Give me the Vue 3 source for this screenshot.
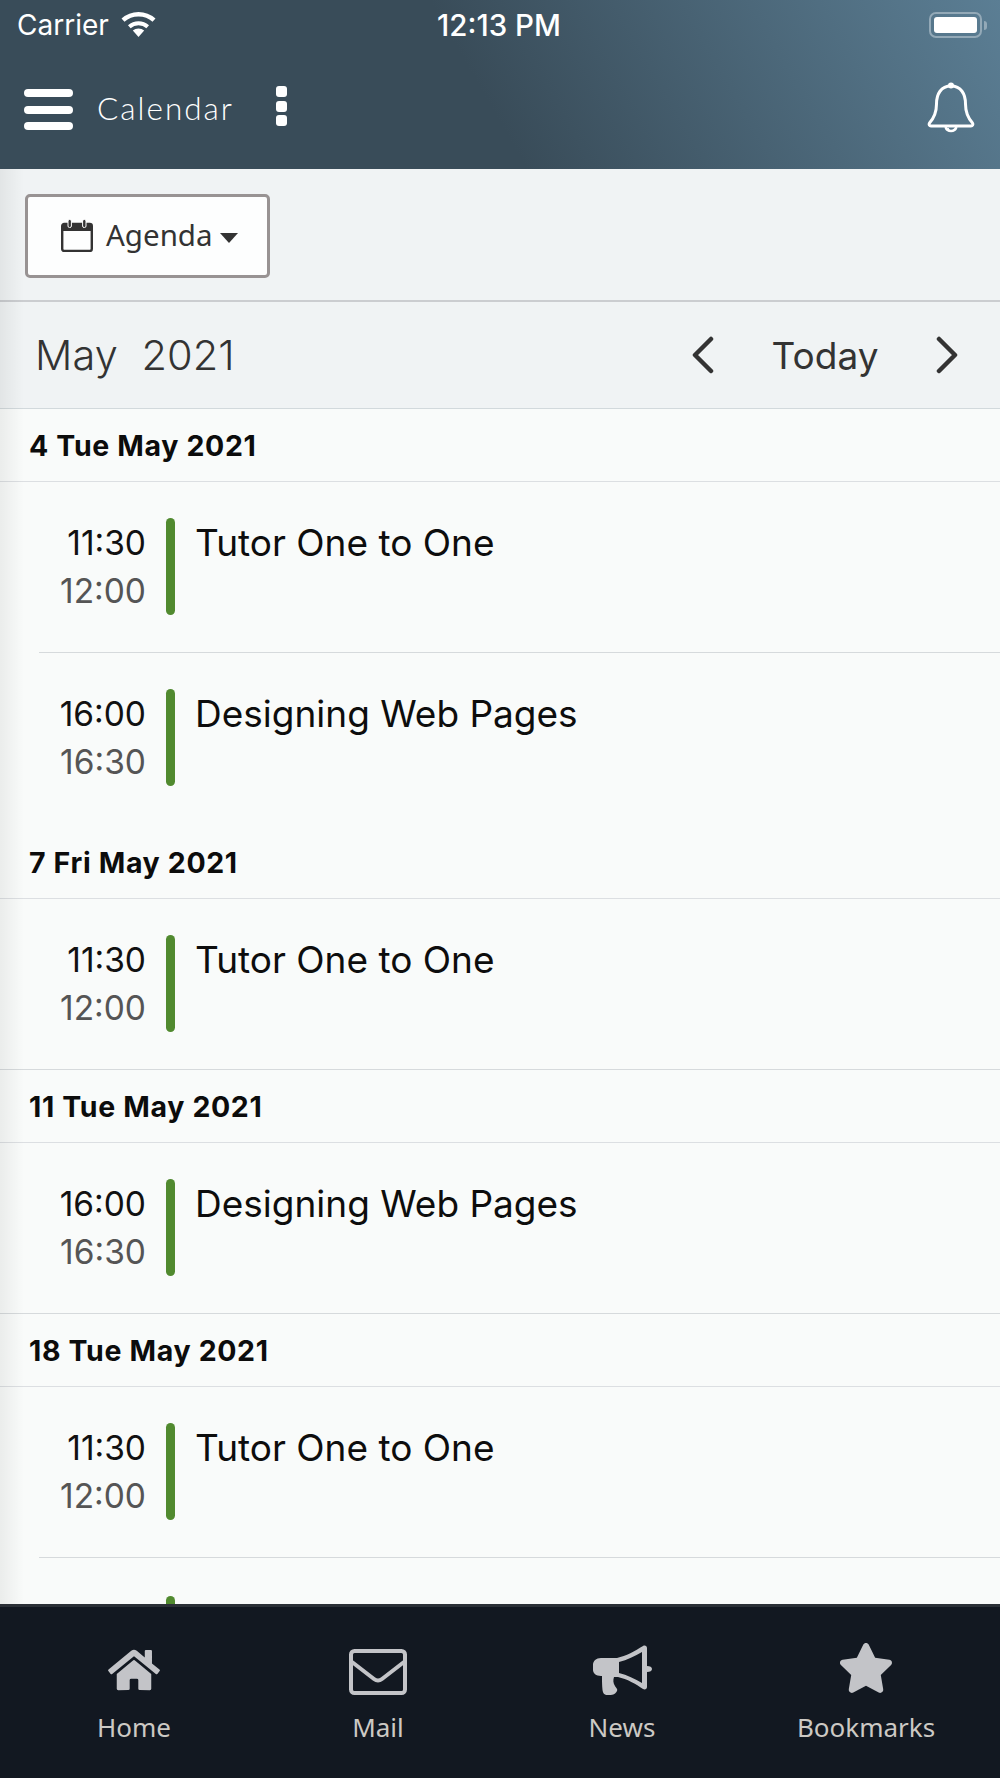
<template>
  <div class="screen">
    <header class="top">
      <div class="status">
        <div class="carrier">
          <span>Carrier</span>
          <svg class="wifi" viewBox="0 0 37 27">
            <path d="M18.5 27 L12.8 20.6 A8.6 8.6 0 0 1 24.2 20.6 Z" fill="#fff" />
            <path d="M9.3 16.7 A14 14 0 0 1 27.7 16.7" fill="none" stroke="#fff" stroke-width="4" />
            <path d="M3 10.2 A23 23 0 0 1 34 10.2" fill="none" stroke="#fff" stroke-width="4.4" />
          </svg>
        </div>
        <div class="clock">12:13 PM</div>
        <div class="battery-wrap">
          <div class="battery"><div class="battery-fill"></div></div>
          <div class="battery-tip"></div>
        </div>
      </div>
      <div class="nav">
        <div class="burger"><i></i><i></i><i></i></div>
        <div class="page-title">Calendar</div>
        <div class="dots"><i></i><i></i><i></i></div>
        <svg class="bell" viewBox="0 0 48 52">
          <path d="M24 4 C14 4 9.5 12 9.5 22 C9.5 31 7 36 2.5 41 C1.5 42.5 2.5 44 4 44 H44 C45.5 44 46.5 42.5 45.5 41 C41 36 38.5 31 38.5 22 C38.5 12 34 4 24 4 Z" fill="none" stroke="#fff" stroke-width="3" stroke-linejoin="round" />
          <circle cx="24" cy="3.5" r="3" fill="#fff" />
          <path d="M18.5 45 A5.8 5.8 0 0 0 29.5 45" fill="none" stroke="#fff" stroke-width="2.5" />
          <path d="M21 46 A3.5 3.5 0 0 0 24.5 49" fill="none" stroke="#fff" stroke-width="1.5" />
        </svg>
      </div>
    </header>

    <div class="content">
      <div class="toolbar">
        <button class="view-btn">
          <svg class="cal-icon" viewBox="0 0 32 33">
            <rect x="1.2" y="5" width="29.6" height="27" rx="2" fill="none" stroke="#333" stroke-width="2.4" />
            <rect x="1.2" y="5" width="29.6" height="7" fill="#333" />
            <rect x="7" y="0.5" width="3.4" height="8" rx="1.5" fill="#333" stroke="#fff" stroke-width="1" />
            <rect x="21.6" y="0.5" width="3.4" height="8" rx="1.5" fill="#333" stroke="#fff" stroke-width="1" />
          </svg>
          <span>Agenda</span>
          <i class="caret"></i>
        </button>
      </div>

      <div class="month-bar">
        <div class="month">May&nbsp;&nbsp;2021</div>
        <svg class="chev" viewBox="0 0 22 38"><path d="M19 3 L3 19 L19 35" /></svg>
        <div class="today">Today</div>
        <svg class="chev" viewBox="0 0 22 38"><path d="M3 3 L19 19 L3 35" /></svg>
      </div>

      <main class="agenda">
        <section v-for="day in days" :key="day.label" class="day">
          <div class="day-head">{{ day.label }}</div>
          <div v-for="(ev, i) in day.events" :key="i" class="event" :class="{ lined: ev.lined, inset: ev.inset }">
            <div class="times">
              <div class="start">{{ ev.start }}</div>
              <div class="end">{{ ev.end }}</div>
            </div>
            <div class="bar"></div>
            <div class="name">{{ ev.name }}</div>
          </div>
        </section>
        <div class="bar peek"></div>
      </main>

      <div class="edge-shade"></div>
    </div>

    <footer class="tabs">
      <div class="tab">
        <svg class="ico-home" viewBox="0 0 576 512">
          <path d="M280.37 148.26L96 300.11V464a16 16 0 0 0 16 16l112.06-.29a16 16 0 0 0 15.92-16V368a16 16 0 0 1 16-16h64a16 16 0 0 1 16 16v95.64a16 16 0 0 0 16 16.05L464 480a16 16 0 0 0 16-16V300L295.67 148.26a12.19 12.19 0 0 0-15.3 0zM571.6 251.47L488 182.56V44.05a12 12 0 0 0-12-12h-56a12 12 0 0 0-12 12v72.61L318.47 43a48 48 0 0 0-61 0L4.34 251.47a12 12 0 0 0-1.6 16.9l25.5 31A12 12 0 0 0 45.15 301l235.22-193.74a12.19 12.19 0 0 1 15.3 0L530.9 301a12 12 0 0 0 16.9-1.6l25.5-31a12 12 0 0 0-1.7-16.93z" />
        </svg>
        <span>Home</span>
      </div>
      <div class="tab">
        <svg class="ico-mail" viewBox="0 0 58 46">
          <rect x="2" y="2" width="54" height="42" rx="3.5" fill="none" stroke="#c3c4c8" stroke-width="4" />
          <path d="M3 13 L25 30 Q29 33 33 30 L55 13" fill="none" stroke="#c3c4c8" stroke-width="4" />
        </svg>
        <span>Mail</span>
      </div>
      <div class="tab">
        <svg class="ico-news" viewBox="0 0 59 51">
          <path fill-rule="evenodd" d="M8 13 H24 C33 11 42 6 50 1 C52 0 54 1 54 3 V21 C57 21 59 22 59 24 C59 26 57 27 54 27 V42 C54 44 52 45 50 44 C43 39 34 34 25 32 H21 C20 35 20 38 22 41 C23 43 25 44 24 46 C22 50 19 50 15 50 C11 50 10 48 9.5 45 C9 40 9 36 9 31 H8 C3 31 0 28 0 25 V20 C0 16 3 13 8 13 Z M26 17 V28 C34 30 42 34 49 38 V7 C42 11 34 15 26 17 Z" />
        </svg>
        <span>News</span>
      </div>
      <div class="tab">
        <svg class="ico-star" viewBox="0 0 576 512">
          <path d="M259.3 17.8L194 150.2 47.9 171.5c-26.2 3.8-36.7 36.1-17.7 54.6l105.7 103-25 145.5c-4.5 26.3 23.2 46 46.4 33.7L288 439.6l130.7 68.7c23.2 12.2 50.9-7.4 46.4-33.7l-25-145.5 105.7-103c19-18.5 8.5-50.8-17.7-54.6L382 150.2 316.7 17.8c-11.7-23.6-45.6-23.9-57.4 0z" />
        </svg>
        <span>Bookmarks</span>
      </div>
    </footer>
  </div>
</template>

<script setup>
const tutor = { start: '11:30', end: '12:00', name: 'Tutor One to One' }
const web = { start: '16:00', end: '16:30', name: 'Designing Web Pages' }

const days = [
  { label: '4 Tue May 2021', events: [{ ...tutor, lined: true, inset: true }, web] },
  { label: '7 Fri May 2021', events: [{ ...tutor, lined: true }] },
  { label: '11 Tue May 2021', events: [{ ...web, lined: true }] },
  { label: '18 Tue May 2021', events: [{ ...tutor, lined: true, inset: true }] },
]
</script>

<style>
html, body {
  margin: 0;
  padding: 0;
}
</style>

<style scoped>
.screen {
  width: 1000px;
  height: 1778px;
  display: flex;
  flex-direction: column;
  overflow: hidden;
  background: #f9fbfa;
  font-family: Inter, "Liberation Sans", sans-serif;
}

.top {
  height: 169px;
  flex: none;
  color: #fff;
  background: linear-gradient(60deg, #394c59 48%, #5b7e94 100%);
}

.status {
  height: 50px;
  display: grid;
  grid-template-columns: 1fr auto 1fr;
  align-items: center;
  padding: 0 17px;
}

.carrier {
  display: flex;
  align-items: center;
  gap: 11px;
  font-size: 28px;
}

.wifi {
  width: 37px;
  height: 27px;
  margin-top: -3px;
}

.clock {
  font-size: 29.5px;
  font-weight: 500;
  margin-left: -2px;
}

.battery-wrap {
  display: flex;
  align-items: center;
  justify-content: flex-end;
  gap: 2px;
  margin-right: -4px;
}

.battery {
  width: 53px;
  height: 26px;
  box-sizing: border-box;
  border: 2px solid #93a9b7;
  border-radius: 7px;
  padding: 3px;
}

.battery-fill {
  height: 100%;
  background: #fff;
  border-radius: 3px;
}

.battery-tip {
  width: 3px;
  height: 9px;
  background: #93a9b7;
  border-radius: 0 3px 3px 0;
}

.nav {
  height: 119px;
  display: flex;
  align-items: flex-start;
  padding: 0 25px 0 24px;
}

.burger {
  width: 49px;
  margin-top: 39px;
  display: flex;
  flex-direction: column;
  gap: 8.5px;
}

.burger i {
  height: 8px;
  background: #fff;
  border-radius: 4px;
}

.page-title {
  margin: 38px 0 0 24px;
  width: 179px;
  font-family: Lato, sans-serif;
  font-weight: 300;
  font-size: 31.5px;
  line-height: 40px;
  letter-spacing: 2px;
}

.dots {
  margin-top: 36px;
  display: flex;
  flex-direction: column;
  gap: 3.5px;
}

.dots i {
  width: 11px;
  height: 11px;
  background: #fff;
  border-radius: 3px;
}

.bell {
  width: 48px;
  height: 52px;
  margin: 32px 0 0 auto;
}

.content {
  position: relative;
  flex: 1;
  min-height: 0;
  display: flex;
  flex-direction: column;
}

.toolbar {
  height: 131px;
  flex: none;
  background: #f0f3f4;
  border-bottom: 2px solid #cbcdd0;
  padding-left: 25px;
  display: flex;
  align-items: flex-start;
}

.view-btn {
  width: 245px;
  height: 84px;
  margin-top: 25px;
  padding: 0 0 0 33px;
  box-sizing: border-box;
  display: flex;
  align-items: center;
  background: #fdfefe;
  border: 3px solid #989393;
  border-radius: 5px;
  color: #333;
  font-family: "Noto Sans", sans-serif;
  font-size: 29.5px;
}

.view-btn span {
  margin-top: -4px;
}

.cal-icon {
  width: 32px;
  height: 33px;
  margin: -2px 13px 0 0;
}

.caret {
  margin: 3px 0 0 7px;
  border-top: 10px solid #333;
  border-left: 9.5px solid transparent;
  border-right: 9.5px solid transparent;
}

.month-bar {
  height: 106px;
  flex: none;
  display: flex;
  align-items: center;
  background: #f0f3f4;
  border-bottom: 1px solid #d2d9dc;
  padding-left: 35px;
  color: #333;
}

.month {
  width: 657px;
  font-size: 41.5px;
  font-weight: 300;
  letter-spacing: 0.1px;
}

.chev {
  width: 22px;
  height: 38px;
  fill: none;
  stroke: #333;
  stroke-width: 4.5;
  stroke-linecap: round;
  stroke-linejoin: round;
}

.today {
  width: 222px;
  text-align: center;
  font-size: 37px;
  color: #333;
}

.agenda {
  flex: 1;
  min-height: 0;
  overflow: hidden;
}

.day-head {
  height: 73px;
  box-sizing: border-box;
  border-bottom: 1px solid #dcdfe2;
  padding-left: 29px;
  display: flex;
  align-items: center;
  font-size: 28.5px;
  font-weight: 700;
  letter-spacing: 0.65px;
  color: #0c0c0c;
}

.event {
  display: flex;
  align-items: flex-start;
  height: 173px;
  box-sizing: border-box;
  padding-top: 36px;
  position: relative;
}

.event.lined {
  height: 171px;
  border-bottom: 1px solid #d6dadc;
}

.event.inset {
  border-bottom: 0;
}

.event.inset::after {
  content: "";
  position: absolute;
  left: 39px;
  right: 0;
  bottom: 0;
  border-bottom: 1px solid #d6dadc;
}

.times {
  width: 146px;
  text-align: right;
  font-size: 33.5px;
  line-height: 48px;
  margin-top: 1px;
}

.start {
  color: #111;
}

.end {
  color: #555;
}

.bar {
  width: 9px;
  height: 97px;
  margin-left: 20px;
  border-radius: 4.5px;
  background: #518a2f;
  flex: none;
}

.peek {
  margin: 38px 0 0 166px;
}

.name {
  margin: 1px 0 0 20px;
  font-size: 37px;
  line-height: 48px;
  color: #0d0d0d;
}

.edge-shade {
  position: absolute;
  inset: 0 auto 0 0;
  width: 24px;
  background: linear-gradient(to right, rgba(0, 0, 0, 0.06), rgba(0, 0, 0, 0));
  pointer-events: none;
}

.tabs {
  height: 174px;
  flex: none;
  box-sizing: border-box;
  border-top: 3px solid #2b3037;
  background: #121821;
  padding: 0 12px;
  display: grid;
  grid-template-columns: repeat(4, 1fr);
}

.tab {
  position: relative;
  text-align: center;
  color: #ccc9c4;
  font-family: "Noto Sans", sans-serif;
  font-size: 26px;
}

.tab span {
  position: absolute;
  left: 0;
  right: 0;
  top: 102px;
}

.tab svg {
  fill: #c3c4c8;
  display: block;
  margin: 0 auto;
}

.tab .ico-home {
  width: 52px;
  height: 46px;
  margin-top: 40px;
}

.tab .ico-mail {
  width: 58px;
  height: 46px;
  margin-top: 42px;
}

.tab .ico-news {
  width: 59px;
  height: 51px;
  margin-top: 38px;
}

.tab .ico-star {
  width: 56px;
  height: 52px;
  margin-top: 35px;
}
</style>
